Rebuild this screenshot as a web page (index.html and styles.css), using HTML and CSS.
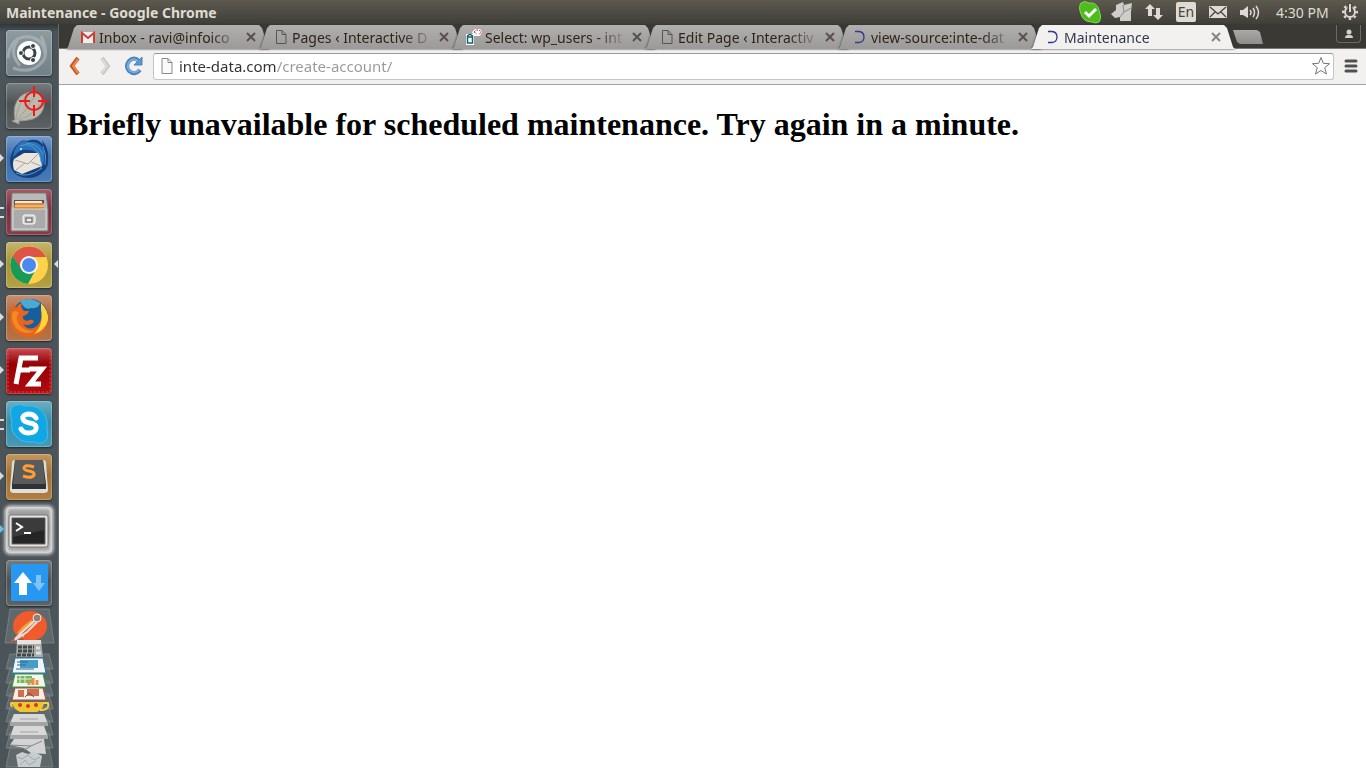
FILE: index.html
```html
<!DOCTYPE html>
<html lang="en">
	<head>
		<meta charset="UTF-8" />
		<meta name="viewport" content="width=device-width, initial-scale=1.0" />
		<title>Maintenance</title>
		<link rel="stylesheet" href="styles.css">
	</head>
	<body>
		<header class="panel">
			<span class="window-title">Maintenance - Google Chrome</span>
			<div class="indicators">
				<svg class="indicator" viewBox="0 0 22 24">
					<path d="M2 3Q5 0 10 3Q18 2 20 10Q23 18 20 22Q17 24 13 22Q4 22 2 14Q-1 7 2 3Z" fill="#4fbc1e" stroke="#79dc49" />
					<path d="M6 12L10 16L17 9" fill="none" stroke="#fff" stroke-width="3" />
				</svg>
				<svg class="indicator" viewBox="0 0 22 24">
					<path d="M5 5L12 2L13 5L21 3L20 12L20 21L9 21L9 17L4 18L0 14L5 10Z" fill="#cfcdca" />
					<path d="M12 5L13 12L9 17M13 12L20 8" fill="none" stroke="#8b8985" />
				</svg>
				<svg class="indicator" viewBox="0 0 22 24">
					<path d="M2 9L7 4L12 9H9V16H5V9ZM10 15L15 20L20 15H17V8H13V15Z" fill="#dfdbd2" />
				</svg>
				<span class="language">En</span>
				<svg class="indicator" viewBox="0 0 22 24">
					<rect x="2" y="6" width="18" height="12" rx="1" fill="#dfdbd2" />
					<path d="M3 7L11 14L19 7M3 17L8 12M19 17L14 12" fill="none" stroke="#45433e" stroke-width="1.3" />
				</svg>
				<svg class="indicator" viewBox="0 0 22 24">
					<path d="M1 10H4L9 6V18L4 15H1Z" fill="#dfdbd2" />
					<path d="M11 10Q13 12.500 11 15M14 8Q17 12.500 14 17M17 6Q22 12.500 17 19" fill="none" stroke="#dfdbd2" stroke-width="1.500" />
				</svg>
				<time class="clock">4:30 PM</time>
				<svg class="indicator" viewBox="0 0 22 24">
					<circle cx="10" cy="12" r="7" fill="none" stroke="#dfdbd2" stroke-width="2" stroke-dasharray="2.500 2.998" stroke-dashoffset="1.250" />
					<circle cx="10" cy="12" r="5" fill="none" stroke="#dfdbd2" stroke-width="2" />
					<path d="M10 3V11" stroke="#4a4842" stroke-width="5" />
					<path d="M10 4V12" stroke="#dfdbd2" stroke-width="2" />
				</svg>
			</div>
		</header>

		<div class="desktop">
			<nav class="launcher" aria-label="Launcher">
				<button class="app app-dash" aria-label="Dash">
					<svg viewBox="0 0 46 46">
						<path d="M2 28Q4 5 25 7Q39 11 39 25M7 38Q26 45 37 31Q43 23 35 6M12 10Q2 22 14 36" fill="none" stroke="#b9c3c6" stroke-width="3" opacity=".55" />
						<circle cx="23" cy="23" r="12" fill="#fff" />
						<circle cx="23" cy="23" r="6" fill="none" stroke="#3a4448" stroke-width="3" />
						<g fill="#3a4448" stroke="#fff"><circle cx="15" cy="23" r="2.500" /><circle cx="27" cy="16" r="2.500" /><circle cx="27" cy="30" r="2.500" /></g>
					</svg>
				</button>
				<button class="app app-grey" aria-label="Screenshot">
					<svg viewBox="0 0 46 46">
						<path d="M9 37Q6 22 14 14Q22 7 31 10Q38 14 38 22Q37 32 27 36Q20 38 13 38L13 41L6 38Z" fill="#b9b9ae" stroke="#95958b" />
						<path d="M10 36Q11 22 22 10M11 37Q21 27 30 11M13 37Q29 31 36 19" fill="none" stroke="#a0a096" />
						<circle cx="28" cy="18" r="9" fill="none" stroke="#f01818" stroke-width="2" />
						<path d="M13 18H24M32 18H43M28 3V14M28 22V33" stroke="#f01818" stroke-width="2" />
					</svg>
				</button>
				<button class="app app-blue running" aria-label="Thunderbird">
					<svg viewBox="0 0 46 46">
						<path d="M12 8Q15 3 21 5Q32 1 37 9L36 4Q43 13 42 22Q43 31 38 35Q32 42 23 42Q11 42 6 34Q2 25 6 17Q8 11 12 8Z" fill="#173f7d" />
						<path d="M12 9Q15 3 22 6Q34 4 38 15Q40 26 34 34L33 22Q31 14 23 14Q13 12 7 22Q8 12 12 9Z" fill="#2a73b8" />
						<path d="M8 23L18 17L33 17L36 30L16 38L8 34Q6 28 8 23Z" fill="#e9e5dc" />
						<path d="M9 24L22 28L32 18M10 34L19 27M35 30L25 26" fill="none" stroke="#aaa59c" />
						<path d="M14 10Q23 6 29 13Q35 18 35 26M20 7Q33 8 37 19M10 37Q22 43 36 32M37 10Q41 20 39 29" fill="none" stroke="#4d9ad6" />
						<circle cx="15" cy="13" r="1" fill="#e8f4ff" />
					</svg>
				</button>
				<button class="app app-wine running double" aria-label="Files">
					<svg viewBox="0 0 46 46">
						<path d="M6 4H40L42 20V42H5V20Z" fill="#b9b9b7" stroke="#777" />
						<path d="M8 11H38V21H8Z" fill="#57504c" />
						<path d="M9 12H36V15H9Z" fill="#f7ead7" /><path d="M9 14H38V20H8Z" fill="#dc8739" /><path d="M9 17H38" stroke="#ffe0a4" />
						<path d="M7 20H40V40H7Z" fill="#aaaaab" stroke="#d5d5d5" />
						<rect x="17" y="26" width="12" height="9" rx="2" fill="#ccc" stroke="#fff" />
						<rect x="20" y="29" width="6" height="4" fill="#eee" stroke="#555" />
					</svg>
				</button>
				<button class="app app-yellow running focused" aria-label="Google Chrome">
					<svg viewBox="0 0 46 46">
						<circle cx="23" cy="23" r="19" fill="#ffd24a" />
						<path d="M6.500 14A19 19 0 0 1 40 15H23L15 28Z" fill="#de5449" />
						<path d="M6.500 14L16 28L30 27L22 42A19 19 0 0 1 6.500 14Z" fill="#179b57" />
						<circle cx="23" cy="23" r="9" fill="#f5f5f5" /><circle cx="23" cy="23" r="7" fill="#4a89ee" />
					</svg>
				</button>
				<button class="app app-orange running" aria-label="Firefox">
					<svg viewBox="0 0 46 46">
						<circle cx="24" cy="22" r="18" fill="#155f9f" />
						<path d="M14 6Q24 1 34 8Q33 14 25 13Q19 16 14 6Z" fill="#4da9d2" />
						<path d="M5 15L7 8L10 13Q12 9 16 8Q14 12 18 16H23Q22 20 17 21Q16 25 21 26Q27 23 28 27Q23 32 17 29Q23 37 31 31Q37 26 35 14Q42 20 42 26Q39 42 23 42Q5 40 4 24Z" fill="#e7651c" />
						<path d="M35 8Q43 16 42 25Q39 36 28 39Q38 30 35 14Z" fill="#ffd635" />
						<path d="M6 18Q10 14 13 18Q9 22 12 28Q18 37 28 36Q19 41 10 33Q5 26 6 18Z" fill="#f38b25" />
					</svg>
				</button>
				<button class="app app-red running" aria-label="FileZilla">
					<svg viewBox="0 0 46 46">
						<rect x="2" y="2" width="42" height="42" rx="1" fill="none" stroke="#d45357" stroke-dasharray="2 2" />
						<path d="M10 36L15 10H32M13 22H24M23 21H36L24 36H35" fill="none" stroke="#fff" stroke-width="5" />
					</svg>
				</button>
				<button class="app app-teal running double" aria-label="Skype">
					<svg viewBox="0 0 46 46">
						<path d="M6 6Q12 2 19 5Q34 3 40 16Q42 22 41 28Q44 39 36 42Q32 43 28 41Q12 43 6 29Q5 25 6 20Q3 11 6 6Z" fill="#11a7e5" stroke="#46bce9" />
						<path d="M30 17Q28 13 22 13Q16 14 17 18Q18 21 24 22Q31 23 30 28Q29 32 22 32Q17 32 15 28" fill="none" stroke="#fff" stroke-width="5" stroke-linecap="round" />
					</svg>
				</button>
				<button class="app app-brown running" aria-label="Sublime Text">
					<svg viewBox="0 0 46 46">
						<path d="M6 9Q6 6 9 6H37Q40 6 40 9L42 36Q42 39 38 39H8Q4 39 4 36Z" fill="#dedede" />
						<path d="M9 6H37L40 30V35H6V30Z" fill="#303234" /><path d="M9 6H37L39 30H7Z" fill="#595b5d" />
						<path d="M28 13Q19 10 18 14Q18 16 23 17Q29 18 28 21Q26 25 17 22" fill="none" stroke="#ff9d35" stroke-width="3" />
					</svg>
				</button>
				<button class="app app-terminal running attention" aria-label="Terminal">
					<svg viewBox="0 0 46 46">
						<rect x="3" y="8" width="39" height="32" rx="2" fill="#e4e4e1" stroke="#777" />
						<rect x="6" y="11" width="33" height="26" fill="#252525" stroke="#666" /><path d="M7 12H38V23L7 30Z" fill="#3b3b3b" />
						<path d="M10 16L16 20L10 24M18 26H25" fill="none" stroke="#fff" stroke-width="2" />
					</svg>
				</button>
				<button class="app app-grey" aria-label="File transfer">
					<svg viewBox="0 0 46 46">
						<rect x="5" y="4" width="37" height="37" rx="1" fill="#2698f2" />
						<path d="M8 23L17 12L26 23H21V35H13V23Z" fill="#fff" />
						<path d="M30 15H35V23H39L33 31L27 23H30Z" fill="#82c2f5" />
					</svg>
				</button>
				<!-- folded launcher items -->
				<svg class="folded" viewBox="0 0 59 160" role="img" aria-label="More applications">
					<g fill="#747b7d" fill-opacity=".5" stroke="#969c9e" stroke-opacity=".5">
						<path d="M10 1H49L54 35H5Z" />
						<path d="M10 46H49L53 61H6ZM10 60H49L53 75H6ZM10 73H49L53 88H6ZM10 86H49L53 101H6ZM10 99H49L53 114H6ZM10 112H49L53 127H6ZM10 125H49L53 140H6ZM10 139H49L53 159H6Z" />
					</g>
					<ellipse cx="30" cy="18" rx="17" ry="15" fill="#f15a2a" />
					<path d="M10 34L18 27L21 31Z" fill="#f15a2a" />
					<path d="M17 25L22 19L31 12L35 15L25 22L20 26Z" fill="#f5a03c" />
					<path d="M15 31L20 26L34 13M15 32L27 24L37 14M20 26L24 28" fill="none" stroke="#ddd" stroke-width="2" />
					<circle cx="37" cy="10" r="4" fill="#8f8179" stroke="#eee" />
					<path d="M17 32H41L43 49H16Z" fill="#ababab" /><path d="M17 32H41V36H17Z" fill="#e5e5e5" />
					<path d="M18 39H34M18 43H34M17 47H34" stroke="#414849" stroke-width="3" stroke-dasharray="4 1" /><path d="M36 40H40M36 45H41" stroke="#dce0e4" stroke-width="3" />
					<path d="M15 50H43L46 65H12Z" fill="#f0f5f7" stroke="#2276ac" /><path d="M20 52H38V60H20Z" fill="#479bc7" /><path d="M17 54H28M17 57H26M16 61H34" stroke="#246d9a" />
					<path d="M15 66H43L46 79H12Z" fill="#f1f7ec" stroke="#379843" /><path d="M17 68H32V75H17Z" fill="#74b85b" /><path d="M20 68V75M25 68V75M17 71H32" stroke="#e4f1df" /><path d="M29 77V73M33 77V70M37 77V72" stroke="#e3904b" stroke-width="3" />
					<path d="M15 80H43L46 92H12Z" fill="#f5eee9" stroke="#a75335" /><path d="M18 82H24V89H18ZM27 81H39V88H27Z" fill="#cf704d" /><path d="M25 89L29 85L34 89" fill="none" stroke="#555" />
					<path d="M12 94H44Q44 101 37 104H20Q13 101 12 94Z" fill="#f0c52d" /><path d="M43 95H48Q50 102 40 102M14 96Q9 93 12 99" fill="none" stroke="#f3cf41" stroke-width="2" />
					<g fill="#d3372f"><circle cx="20" cy="97" r="2" /><circle cx="28" cy="98" r="2" /><circle cx="36" cy="97" r="2" /></g>
					<path d="M14 106H44L48 115V118H10V115ZM14 118H44L48 128V131H10V128Z" fill="#a3a5a5" /><path d="M14 106H44L47 114H11ZM14 118H44L47 127H11Z" fill="#d8d8d8" /><path d="M20 111H38M20 124H38" stroke="#a2a2a2" />
					<path d="M14 131H44L46 146L31 145L24 140L10 137Z" fill="#d2d3d3" /><path d="M10 137L31 138L42 133M31 138L24 142" fill="none" stroke="#858686" />
					<path d="M16 147L22 144L28 146L35 144L42 148L40 159H18Z" fill="#c7cccd" /><path d="M18 149L22 151L28 147L34 152L40 149M20 157L25 152L29 157L36 153" fill="none" stroke="#a0a8aa" />
				</svg>
			</nav>

			<section class="browser">
				<div class="tab-strip">
					<div class="tab">
						<svg class="favicon" viewBox="0 0 16 16"><path d="M1 3H15V14H1Z" fill="#eee" /><path d="M2 14V4L8 9L14 4V14" fill="none" stroke="#d53b31" stroke-width="2" /></svg>
						<a class="tab-title" href="#">Inbox - ravi@infoico</a>
						<button class="close" aria-label="Close tab"><svg viewBox="0 0 10 10"><path d="M1 1L9 9M9 1L1 9" /></svg></button>
					</div>
					<div class="tab">
						<svg class="favicon" viewBox="0 0 16 16"><path d="M3.500 1.500H9L13 5.500V14.500H3.500ZM9 1.500V5.500H13" fill="none" stroke="#555" /></svg>
						<a class="tab-title" href="#">Pages ‹ Interactive D</a>
						<button class="close" aria-label="Close tab"><svg viewBox="0 0 10 10"><path d="M1 1L9 9M9 1L1 9" /></svg></button>
					</div>
					<div class="tab">
						<svg class="favicon" viewBox="0 0 16 16"><path d="M0 5H8V16H0ZM6 3L9 0H14L16 3L14 7H8Z" fill="#fff" /><path d="M1.500 7Q4 4 6.500 7V14H1.500ZM1.500 8H6.500" fill="#fff" stroke="#146372" stroke-width="1.500" /><path d="M8 3L10 1H13L15 3L13 6M8 3L11 5" fill="none" stroke="#d33" stroke-dasharray="2 1" /></svg>
						<a class="tab-title" href="#">Select: wp_users - int</a>
						<button class="close" aria-label="Close tab"><svg viewBox="0 0 10 10"><path d="M1 1L9 9M9 1L1 9" /></svg></button>
					</div>
					<div class="tab">
						<svg class="favicon" viewBox="0 0 16 16"><path d="M3.500 1.500H9L13 5.500V14.500H3.500ZM9 1.500V5.500H13" fill="none" stroke="#555" /></svg>
						<a class="tab-title" href="#">Edit Page ‹ Interactiv</a>
						<button class="close" aria-label="Close tab"><svg viewBox="0 0 10 10"><path d="M1 1L9 9M9 1L1 9" /></svg></button>
					</div>
					<div class="tab">
						<svg class="favicon" viewBox="0 0 16 16"><path d="M3 2.500H7Q12 3 12 8Q12 13 7 13.500H3" fill="none" stroke="#303b8b" stroke-width="1.300" /></svg>
						<a class="tab-title" href="#">view-source:inte-dat</a>
						<button class="close" aria-label="Close tab"><svg viewBox="0 0 10 10"><path d="M1 1L9 9M9 1L1 9" /></svg></button>
					</div>
					<div class="tab active">
						<svg class="favicon" viewBox="0 0 16 16"><path d="M3 2.500H7Q12 3 12 8Q12 13 7 13.500H3" fill="none" stroke="#303b8b" stroke-width="1.300" /></svg>
						<a class="tab-title" href="#">Maintenance</a>
						<button class="close" aria-label="Close tab"><svg viewBox="0 0 10 10"><path d="M1 1L9 9M9 1L1 9" /></svg></button>
					</div>
					<button class="new-tab" aria-label="New tab"></button>
					<button class="profile" aria-label="Profile">
						<svg viewBox="0 0 10 10"><circle cx="5" cy="3" r="2.500" /><path d="M1 9Q1 6 4 6H6Q9 6 9 9Z" /></svg>
					</button>
				</div>

				<form class="toolbar">
					<button type="button" class="tool" aria-label="Back">
						<svg viewBox="0 0 20 20"><path d="M12 2L6 10L12 18" fill="none" stroke="#c65322" stroke-width="4" /><path d="M12 3L7 10L12 17" fill="none" stroke="#f18a45" stroke-width="2" /></svg>
					</button>
					<button type="button" class="tool" aria-label="Forward">
						<svg viewBox="0 0 20 20"><path d="M7 2L13 10L7 18" fill="none" stroke="#c9c7c4" stroke-width="4" /><path d="M7 3L12 10L7 17" fill="none" stroke="#dddbd8" stroke-width="2" /></svg>
					</button>
					<button type="button" class="tool" aria-label="Reload">
						<svg viewBox="0 0 20 20"><path d="M15 5Q10 0 5 5Q1 10 5 15Q11 20 16 14" fill="none" stroke="#4b82bd" stroke-width="4" /><path d="M18 1V9H10Z" fill="#5b96d2" stroke="#4b82bd" /><path d="M14 5Q9 1 5 6Q2 11 6 15Q11 18 15 14" fill="none" stroke="#78acdc" stroke-width="2" /></svg>
					</button>
					<div class="address">
						<svg class="page-icon" viewBox="0 0 16 16"><path d="M3 .5H9L13 4.500V15.500H3ZM9 .5V4.500H13" fill="#fafafa" stroke="#888" /></svg>
						<input class="url" type="text" aria-label="Address" value="inte-data.com/create-account/" />
						<button type="button" class="star" aria-label="Bookmark this page">
							<svg viewBox="0 0 20 20"><path d="M10 1.500L12.300 7.300L18.500 7.700L13.700 11.700L15.500 18L10 14.500L4.500 18L6.300 11.700L1.500 7.700L7.700 7.300Z" fill="#fff" stroke="#777" stroke-linejoin="round" /></svg>
						</button>
					</div>
					<button type="button" class="menu" aria-label="Menu">
						<svg viewBox="0 0 14 14"><path d="M2 2H12M2 7H12M2 12H12" stroke="#505050" stroke-width="3" stroke-linecap="round" /></svg>
					</button>
				</form>

				<main class="page">
					<h1>Briefly unavailable for scheduled maintenance. Try again in a minute.</h1>
				</main>
			</section>
		</div>
	</body>
</html>
```

FILE: styles.css
```css
* {
	box-sizing: border-box;
}
body {
	margin: 0;
	height: 100vh;
	display: flex;
	flex-direction: column;
	overflow: hidden;
	font-family: "Noto Sans", "Open Sans", sans-serif;
	font-size: 14px;
	background: #3c3b37;
}
button {
	padding: 0;
	border: 0;
	background: none;
	font: inherit;
}
svg {
	display: block;
}

/* top panel */
.panel {
	flex: none;
	height: 24px;
	padding: 0 4px 0 6px;
	display: flex;
	align-items: center;
	justify-content: space-between;
	color: #dfdbd2;
	background: linear-gradient(#5d594e, #3f3e39);
}
.window-title {
	font-weight: bold;
}
.indicators {
	display: flex;
	align-items: center;
	gap: 10px;
}
.indicator {
	width: 22px;
	height: 24px;
}
.language {
	width: 20px;
	height: 20px;
	margin: 0 1px;
	border-radius: 2px;
	line-height: 20px;
	text-align: center;
	color: #45433e;
	background: #dfdbd2;
}
.clock {
	width: 59px;
	padding-left: 5px;
}

.desktop {
	flex: 1;
	min-height: 0;
	display: flex;
}

/* launcher */
.launcher {
	flex: none;
	width: 59px;
	padding-top: 6px;
	display: flex;
	flex-direction: column;
	align-items: center;
	gap: 7px;
	overflow: hidden;
	background: linear-gradient(#30373b, #4a5459 8px);
	border-right: 1px solid #626a6d;
}
.app {
	position: relative;
	flex: none;
	width: 46px;
	height: 46px;
	border-radius: 4px;
	box-shadow: inset 0 0 1px 1px rgba(255, 255, 255, 0.25), 0 1px 2px #22292c;
}
.app svg {
	width: 46px;
	height: 46px;
}
.app-dash {
	background: linear-gradient(#8e9ba0, #718086);
}
.app-grey {
	background: linear-gradient(#767b7d, #4d5254 45%, #5d6264);
}
.app-blue {
	background: linear-gradient(#769bcb, #3a6dad 45%, #467cb9);
}
.app-wine {
	background: linear-gradient(#a45a69, #7b2b3c 45%, #8c3948);
}
.app-yellow {
	background: linear-gradient(#c4b66e, #a99536 45%, #b4a143);
}
.app-orange {
	background: linear-gradient(#c78f6c, #ac6739 45%, #b77346);
}
.app-red {
	background: linear-gradient(#c84c52, #950004 35%, #b00c10);
}
.app-teal {
	background: linear-gradient(#6bafc3, #388eaa 45%, #479ab4);
}
.app-brown {
	background: linear-gradient(#c4975e, #a37031 45%, #b17e3f);
}
.app-terminal {
	background: linear-gradient(#aaa, #878787 45%, #aaa);
	box-shadow: inset 0 0 3px 2px #ddd, 0 0 3px 2px #bbb;
}
/* open window marks */
.running::before {
	content: "";
	position: absolute;
	left: -6px;
	top: 18px;
	border: 4px solid transparent;
	border-left-color: #d9dcdd;
	border-right: 0;
}
.double::before {
	width: 4px;
	height: 7px;
	border: 0;
	border-top: 2px solid #d9dcdd;
	border-bottom: 2px solid #d9dcdd;
}
.attention::before {
	border-left-color: #65c3ea;
}
.focused::after {
	content: "";
	position: absolute;
	right: -6px;
	top: 18px;
	border: 4px solid transparent;
	border-right-color: #d9dcdd;
	border-left: 0;
}
.folded {
	flex: none;
	width: 59px;
	height: 160px;
	margin-top: -5px;
}

/* browser */
.browser {
	flex: 1;
	min-width: 0;
	display: flex;
	flex-direction: column;
	background: #fff;
}
.tab-strip {
	height: 25px;
	padding: 1px 5px 0 7px;
	display: flex;
	background: #3a3934;
	border-bottom: 1px solid #797876;
}
.tab {
	position: relative;
	z-index: 0;
	flex: 1;
	min-width: 0;
	max-width: 204px;
	height: 24px;
	margin-right: -11px;
	padding: 0 14px;
	display: flex;
	align-items: center;
	filter: drop-shadow(0 0 1px #333);
}
.tab::before {
	content: "";
	position: absolute;
	inset: 0;
	z-index: -1;
	background: linear-gradient(#b0afad, #9b9a98);
	clip-path: polygon(0 100%, 2px 22px, 8px 3px, 11px 0, calc(100% - 11px) 0, calc(100% - 8px) 3px, calc(100% - 2px) 22px, 100% 100%);
}
.tab.active {
	z-index: 1;
}
.tab.active::before {
	background: #f2f1f0;
}
.favicon {
	flex: none;
	width: 16px;
	height: 16px;
	margin-right: 3px;
}
.tab-title {
	flex: 1;
	min-width: 0;
	overflow: hidden;
	white-space: nowrap;
	color: #32221c;
	text-decoration: none;
	mask-image: linear-gradient(to right, #000 calc(100% - 32px), transparent);
}
.active .tab-title {
	color: #30394a;
}
.close {
	flex: none;
	width: 10px;
	height: 10px;
	margin-left: 4px;
}
.close svg {
	width: 10px;
	height: 10px;
	stroke: #5c504c;
	stroke-width: 2;
}
.active .close svg {
	stroke: #858585;
}
.new-tab {
	flex: none;
	width: 30px;
	height: 14px;
	margin: 5px auto 0 9px;
	background: linear-gradient(#aaa9a7, #8e8d8b);
	clip-path: polygon(0 0, 24px 0, 27px 2px, 100% 100%, 7px 100%, 4px 12px);
}
.profile {
	width: 25px;
	height: 18px;
	border: 1px solid #6b6a66;
	border-top: 0;
	border-radius: 0 0 4px 4px;
	display: flex;
	align-items: center;
	justify-content: center;
}
.profile svg {
	width: 10px;
	height: 10px;
	fill: #d2d1ce;
}

.toolbar {
	height: 36px;
	padding: 0 8px 1px 7px;
	display: flex;
	align-items: center;
	background: #f2f1f0;
	border-bottom: 1px solid #a5a4a3;
}
.tool {
	width: 20px;
	height: 20px;
	margin-right: 9px;
}
.address {
	flex: 1;
	height: 27px;
	padding: 0 2px 0 5px;
	display: flex;
	align-items: center;
	background: #fff;
	border: 1px solid #c6c5c4;
	border-top-color: #999;
	border-radius: 3px;
}
.page-icon {
	width: 16px;
	height: 16px;
}
.url {
	flex: 1;
	min-width: 0;
	height: 24px;
	padding: 0 0 0 4px;
	border: 0;
	outline: 0;
	font-family: inherit;
	font-size: 15px;
	color: transparent;
	/* dark host, grey path */
	background: linear-gradient(to right, #303030 102px, #999 102px) text;
}
.star,
.star svg {
	width: 20px;
	height: 20px;
}
.menu,
.menu svg {
	width: 14px;
	height: 14px;
}
.menu {
	margin-left: 10px;
}

.page {
	flex: 1;
	padding: 0 8px;
	font-family: "Liberation Serif", serif;
	font-size: 16px;
	color: #000;
}
.page h1 {
	margin: 21px 0;
	font-size: 32px;
}
```
